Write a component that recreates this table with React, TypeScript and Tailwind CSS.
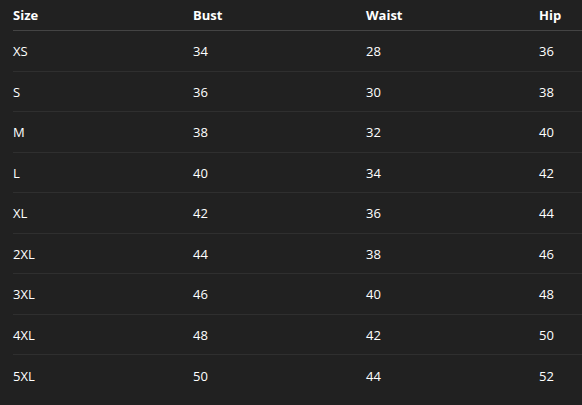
const rows = [
  ["XS", "34", "28", "36"],
  ["S", "36", "30", "38"],
  ["M", "38", "32", "40"],
  ["L", "40", "34", "42"],
  ["XL", "42", "36", "44"],
  ["2XL", "44", "38", "46"],
  ["3XL", "46", "40", "48"],
  ["4XL", "48", "42", "50"],
  ["5XL", "50", "44", "52"],
]

export default function App() {
  return (
    <div className="min-h-screen bg-[#212121] pl-[13px] text-[13px] text-white [font-family:'Open_Sans','Noto_Sans',sans-serif]">
      <div className="grid grid-cols-[180px_173px_173px_1fr] h-[31px] pt-[2px] items-center border-b border-[#444444] font-bold">
        <div>Size</div>
        <div>Bust</div>
        <div>Waist</div>
        <div>Hip</div>
      </div>
      {rows.map((r, i) => (
        <div
          key={i}
          className={`grid grid-cols-[180px_173px_173px_1fr] h-[40.5px] pt-[2px] items-center ${i < rows.length - 1 ? "border-b border-[#2f2f2f]" : ""}`}
        >
          {r.map((c, j) => (
            <div key={j}>{c}</div>
          ))}
        </div>
      ))}
    </div>
  )
}
